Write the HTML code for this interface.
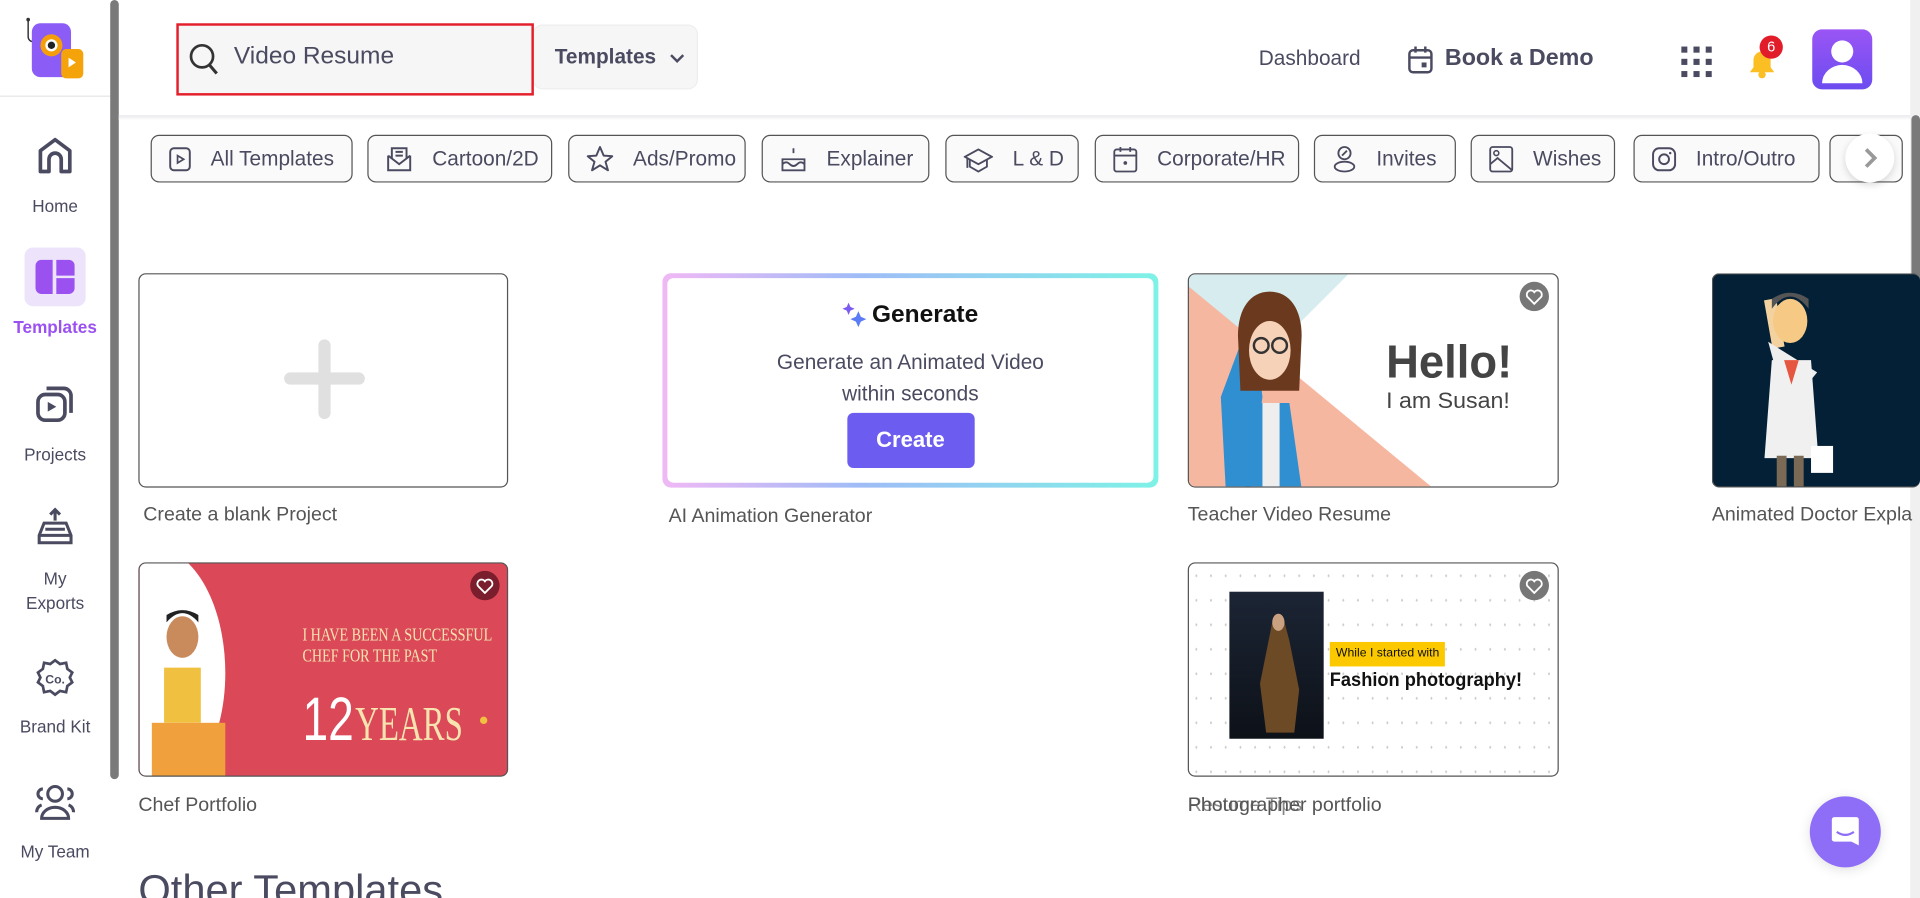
<!DOCTYPE html>
<html><head><meta charset="utf-8"><style>
*{box-sizing:border-box;margin:0;padding:0}
html,body{width:1920px;height:898px;overflow:hidden;background:#fff}
#w{position:absolute;left:0;top:0;width:1568px;height:733px;transform:scale(1.22449,1.2251);transform-origin:0 0;font-family:"Liberation Sans",sans-serif;color:#4a4a60;overflow:hidden}
.a{position:absolute}
.nav{position:absolute;left:0;width:90px;text-align:center;font-size:14px;color:#4a4a60;line-height:20px}
.nav svg{display:block;margin:0 auto 14px}
.chip{position:absolute;top:110px;height:39px;border:1px solid #555;border-radius:7px;background:#fafafa;font-size:17px;color:#4a4a60;display:flex;align-items:center;padding-left:14px}
.chip svg{margin-right:16px;flex:none}
.card{position:absolute;border:1px solid #555;border-radius:6px;overflow:hidden;background:#fff}
.lbl{position:absolute;font-size:16px;color:#555}
.heart{position:absolute;width:24px;height:24px;border-radius:50%;background:#777;display:flex;align-items:center;justify-content:center}
</style></head><body><div id="w">
<!-- sidebar -->
<svg class="a" style="left:18px;top:14px" width="54" height="52" viewBox="0 0 54 52"><path d="M5 2v14a4 4 0 0 0 4 4" stroke="#333" fill="none" stroke-width="1.2"/><circle cx="5" cy="2" r="1.5" fill="#333"/><rect x="8" y="5" width="32" height="44" rx="7" fill="#8b5cf6"/><circle cx="24" cy="23" r="9" fill="#f59e0b"/><circle cx="24" cy="23" r="5" fill="#fff"/><circle cx="24" cy="23" r="3" fill="#222"/><rect x="32" y="26" width="18" height="24" rx="4" fill="#f5a30b"/><path d="M38 33l6 4-6 4z" fill="#fff"/></svg>
<div class="a" style="left:0;top:78px;width:90px;height:1px;background:#e5e5e5"></div>
<div class="a" style="left:90px;top:0;width:7px;height:636px;background:#7a7a7a;border-radius:4px"></div>
<div class="nav" style="top:110px"><svg width="32" height="34" viewBox="0 0 32 34"><path d="M4 30V13L16 4l12 9v17h-7V20a5 5 0 0 0-10 0v10z" fill="none" stroke="#4a4a60" stroke-width="3" stroke-linejoin="round"/></svg>Home</div>
<div class="a" style="left:20px;top:202px;width:50px;height:48px;border-radius:7px;background:#ede4fc"></div>
<svg class="a" style="left:29px;top:212px" width="32" height="28" viewBox="0 0 32 28"><path d="M5 0h9v28H5a5 5 0 0 1-5-5V5a5 5 0 0 1 5-5z" fill="#9b51f0"/><path d="M17 0h10a5 5 0 0 1 5 5v8H17z" fill="#9b51f0"/><path d="M17 15h15v8a5 5 0 0 1-5 5H17z" fill="#9b51f0"/></svg>
<div class="nav" style="top:257px;color:#9b51f0;font-weight:bold">Templates</div>
<div class="nav" style="top:313px"><svg width="34" height="34" viewBox="0 0 34 34"><rect x="3" y="9" width="22" height="21" rx="6" fill="none" stroke="#4a4a60" stroke-width="3"/><path d="M10 4h14a6 6 0 0 1 6 6v14" fill="none" stroke="#4a4a60" stroke-width="3"/><path d="M11 15l7 4-7 4z" fill="#4a4a60"/></svg>Projects</div>
<div class="nav" style="top:414px"><svg width="30" height="34" viewBox="0 0 30 34"><path d="M15 2v9M11 6l4-4 4 4" stroke="#4a4a60" stroke-width="2.5" fill="none"/><path d="M6 13h18l4 10v6H2v-6z" fill="none" stroke="#4a4a60" stroke-width="2.5"/><path d="M7 18h16M3 23h24" stroke="#4a4a60" stroke-width="2.5"/></svg>My<br>Exports</div>
<div class="nav" style="top:537px"><svg width="34" height="32" viewBox="0 0 34 32"><path d="M17 2l4 3 5-1 1 5 4 3-2 4 2 4-4 3-1 5-5-1-4 3-4-3-5 1-1-5-4-3 2-4-2-4 4-3 1-5 5 1z" fill="none" stroke="#4a4a60" stroke-width="2.2"/><text x="17" y="21" font-size="10" text-anchor="middle" fill="#4a4a60" font-family="Liberation Sans" font-weight="bold">Co.</text></svg>Brand Kit</div>
<div class="nav" style="top:639px"><svg width="36" height="32" viewBox="0 0 36 32"><circle cx="18" cy="9" r="6" fill="none" stroke="#4a4a60" stroke-width="2.5"/><path d="M7 29a11 9 0 0 1 22 0z" fill="none" stroke="#4a4a60" stroke-width="2.5"/><path d="M8 5a4 4 0 0 0 0 8M28 5a4 4 0 0 1 0 8M3 24a6 6 0 0 1 4-6M33 24a6 6 0 0 0-4-6" fill="none" stroke="#4a4a60" stroke-width="2.5"/></svg>My Team</div>
<!-- header -->
<div class="a" style="left:97px;top:94px;width:1463px;height:4px;background:linear-gradient(#e8e8ee,#fff)"></div>
<div class="a" style="left:435px;top:20px;width:135px;height:53px;background:#f6f6f6;border:1px solid #eee;border-radius:8px;font-weight:bold;font-size:17px;color:#4a4a60;padding:16px 0 0 17px">Templates <svg width="12" height="8" viewBox="0 0 12 8" style="margin-left:6px"><path d="M1 1l5 5 5-5" stroke="#4a4a60" stroke-width="2" fill="none"/></svg></div>
<div class="a" style="left:144px;top:19px;width:292px;height:59px;background:#f6f6f6;border:2px solid #e41e2a"></div>
<svg class="a" style="left:154px;top:35px" width="26" height="28" viewBox="0 0 26 28"><circle cx="11" cy="11" r="9" fill="none" stroke="#333" stroke-width="2.2"/><path d="M17 18l6 7" stroke="#333" stroke-width="2.5"/></svg>
<div class="a" style="left:191px;top:35px;font-size:20px;color:#4a4a60">Video Resume</div>
<div class="a" style="left:1028px;top:38px;font-size:17px;color:#4a4a60">Dashboard</div>
<svg class="a" style="left:1149px;top:37px" width="22" height="24" viewBox="0 0 22 24"><rect x="2" y="4" width="18" height="18" rx="3" fill="none" stroke="#4a4a60" stroke-width="2"/><path d="M2 10h18M7 1v5M15 1v5" stroke="#4a4a60" stroke-width="2"/><rect x="12" y="14" width="4" height="4" fill="#4a4a60"/></svg>
<div class="a" style="left:1180px;top:37px;font-size:19px;font-weight:bold;color:#4a4a60">Book a Demo</div>
<svg class="a" style="left:1373px;top:38px" width="25" height="25" viewBox="0 0 25 25" fill="#4a4a60"><rect x="0" y="0" width="5" height="5"/><rect x="10" y="0" width="5" height="5"/><rect x="20" y="0" width="5" height="5"/><rect x="0" y="10" width="5" height="5"/><rect x="10" y="10" width="5" height="5"/><rect x="20" y="10" width="5" height="5"/><rect x="0" y="20" width="5" height="5"/><rect x="10" y="20" width="5" height="5"/><rect x="20" y="20" width="5" height="5"/></svg>
<svg class="a" style="left:1427px;top:38px" width="24" height="26" viewBox="0 0 24 26"><path d="M12 4a7 7 0 0 0-7 7v6l-3 4h20l-3-4v-6a7 7 0 0 0-7-7z" fill="#fbbf24"/><circle cx="12" cy="23" r="3" fill="#fbbf24"/></svg>
<div class="a" style="left:1437px;top:29px;width:19px;height:19px;border-radius:50%;background:#e11d2a;color:#fff;font-size:12px;text-align:center;line-height:19px">6</div>
<div class="a" style="left:1480px;top:24px;width:49px;height:49px;border-radius:8px;background:linear-gradient(#9a55f5,#6c4cf0);overflow:hidden"><svg width="49" height="49" viewBox="0 0 49 49"><circle cx="24.5" cy="18" r="9" fill="#fff"/><path d="M8 44a16.5 15 0 0 1 33 0z" fill="#fff"/></svg></div>
<!-- chips -->
<div class="chip" style="left:123px;width:165px"><svg width="18" height="20" viewBox="0 0 18 20"><rect x="1" y="1" width="16" height="18" rx="3" fill="none" stroke="#4a4a60" stroke-width="1.6"/><path d="M7 7l5 3-5 3z" fill="none" stroke="#4a4a60" stroke-width="1.4"/></svg>All Templates</div>
<div class="chip" style="left:300px;width:151px"><svg width="22" height="22" viewBox="0 0 22 22"><path d="M2 8v12h18V8" fill="none" stroke="#4a4a60" stroke-width="1.6"/><path d="M2 8l9 7 9-7M5 10V2h12v8M8 5h6M8 8h6" fill="none" stroke="#4a4a60" stroke-width="1.6"/></svg>Cartoon/2D</div>
<div class="chip" style="left:464px;width:145px"><svg width="22" height="22" viewBox="0 0 22 22"><path d="M11 1l3 7 7 .5-5.5 4.5 2 7-6.5-4-6.5 4 2-7L1 8.5 8 8z" fill="none" stroke="#4a4a60" stroke-width="1.6" stroke-linejoin="round"/></svg>Ads/Promo</div>
<div class="chip" style="left:622px;width:137px"><svg width="22" height="22" viewBox="0 0 22 22"><path d="M11 2v4M2 20V11h18v9zM2 20h18M2 15q3-3 6 0t6 0 6 0" fill="none" stroke="#4a4a60" stroke-width="1.5"/></svg>Explainer</div>
<div class="chip" style="left:772px;width:109px"><svg width="24" height="22" viewBox="0 0 24 22"><path d="M12 3L1 9l11 6 11-6zM5 11v6l7 4 7-4v-6M3 10v8" fill="none" stroke="#4a4a60" stroke-width="1.5"/></svg>L &amp; D</div>
<div class="chip" style="left:894px;width:167px"><svg width="20" height="22" viewBox="0 0 20 22"><rect x="1" y="3" width="18" height="18" rx="2" fill="none" stroke="#4a4a60" stroke-width="1.5"/><path d="M1 8h18M6 1v4M14 1v4" stroke="#4a4a60" stroke-width="1.5"/><circle cx="10" cy="14" r="1.5" fill="#4a4a60"/></svg>Corporate/HR</div>
<div class="chip" style="left:1073px;width:116px"><svg width="20" height="22" viewBox="0 0 20 22"><circle cx="10" cy="6" r="5" fill="none" stroke="#4a4a60" stroke-width="1.5"/><path d="M8 8l4-4" stroke="#4a4a60" stroke-width="1.5"/><ellipse cx="10" cy="17" rx="8" ry="4" fill="none" stroke="#4a4a60" stroke-width="1.5"/></svg>Invites</div>
<div class="chip" style="left:1201px;width:118px"><svg width="20" height="22" viewBox="0 0 20 22"><rect x="1" y="1" width="18" height="20" rx="2" fill="none" stroke="#4a4a60" stroke-width="1.5"/><circle cx="6" cy="6" r="2" fill="none" stroke="#4a4a60" stroke-width="1.3"/><path d="M1 15l6-5 12 10" fill="none" stroke="#4a4a60" stroke-width="1.5"/></svg>Wishes</div>
<div class="chip" style="left:1334px;width:152px"><svg width="20" height="22" viewBox="0 0 20 22"><rect x="1" y="2" width="18" height="18" rx="5" fill="none" stroke="#4a4a60" stroke-width="1.6"/><circle cx="10" cy="11" r="4" fill="none" stroke="#4a4a60" stroke-width="1.6"/><circle cx="15" cy="6" r="1" fill="#4a4a60"/></svg>Intro/Outro</div>
<div class="chip" style="left:1494px;width:60px"></div>
<div class="a" style="left:1507px;top:109px;width:40px;height:40px;border-radius:50%;background:#fff;box-shadow:0 2px 6px rgba(0,0,0,.15)"><svg width="40" height="40" viewBox="0 0 40 40"><path d="M17 13l7 7-7 7" stroke="#999" stroke-width="3" fill="none"/></svg></div>
<!-- right scrollbar -->
<div class="a" style="left:1560px;top:0;width:8px;height:733px;background:#f0f0f0"></div>
<div class="a" style="left:1561px;top:94px;width:7px;height:276px;background:#7a7a7a;border-radius:4px"></div>
<!-- row1 -->
<div class="card" style="left:113px;top:223px;width:302px;height:175px"><svg width="302" height="175"><path d="M151 58v55M123 85h56" stroke="#e0e0e0" stroke-width="10" stroke-linecap="round"/></svg></div>
<div class="lbl" style="left:117px;top:412px">Create a blank Project</div>
<div class="a" style="left:541px;top:223px;width:405px;height:175px;border-radius:7px;background:linear-gradient(90deg,#f0b8f5,#9fbcf7 40%,#7ef2e6);padding:4px"><div style="width:100%;height:100%;background:#fff;border-radius:5px;text-align:center">
<div style="padding-top:18px;font-size:20px;font-weight:bold;color:#111"><svg width="20" height="22" viewBox="0 0 20 22" style="vertical-align:-4px;margin-right:4px"><path d="M5 2l1.5 3.5L10 7 6.5 8.5 5 12 3.5 8.5 0 7l3.5-1.5z" fill="#7c5cf0"/><path d="M13 9l2 4.5 4.5 2-4.5 2-2 4.5-2-4.5-4.5-2 4.5-2z" fill="#5b7cf5"/></svg>Generate</div>
<div style="margin-top:14px;font-size:17px;line-height:26px;color:#4a4a60">Generate an Animated Video<br>within seconds</div>
<div style="margin:2px auto 0;width:104px;height:45px;background:#6c5cf0;border-radius:5px;color:#fff;font-weight:bold;font-size:18px;line-height:45px">Create</div></div></div>
<div class="lbl" style="left:546px;top:413px">AI Animation Generator</div>
<div class="card" style="left:970px;top:223px;width:303px;height:175px"><svg width="303" height="175"><path d="M0 0h130L0 130z" fill="#d6ecee"/><path d="M0 10L200 175H0z" fill="#f6b7a1"/><path d="M52 30l8 70-10 75h-20l-4-75z" fill="#2f8fd1"/><path d="M40 50c0-22 10-36 26-36s26 14 26 36l-2 45H42z" fill="#6b3a1e"/><ellipse cx="66" cy="62" rx="17" ry="24" fill="#f6d2b8"/><circle cx="59" cy="58" r="6" fill="none" stroke="#333" stroke-width="2"/><circle cx="74" cy="58" r="6" fill="none" stroke="#333" stroke-width="2"/><path d="M52 105h30l10 70H46z" fill="#2f8fd1"/><path d="M60 105h14v70H60z" fill="#eee"/><text x="161" y="84" font-size="38" font-weight="bold" fill="#444" font-family="Liberation Sans" textLength="103" lengthAdjust="spacingAndGlyphs">Hello!</text><text x="161" y="109" font-size="18" fill="#444" font-family="Liberation Sans" textLength="101" lengthAdjust="spacingAndGlyphs">I am Susan!</text></svg><div class="heart" style="right:7px;top:6px"><svg width="14" height="13" viewBox="0 0 14 13"><path d="M7 12L1.5 6.5a3 3 0 0 1 5.5-4 3 3 0 0 1 5.5 4z" fill="none" stroke="#fff" stroke-width="1.5"/></svg></div></div>
<div class="lbl" style="left:970px;top:412px">Teacher Video Resume</div>
<div class="card" style="left:1398px;top:223px;width:170px;height:175px;background:#042036;border-right:none"><svg width="170" height="175"><rect x="45" y="20" width="10" height="40" fill="#f3d2a0" transform="rotate(-10 50 40)"/><path d="M45 55l15 55 25-30z" fill="#eee"/><ellipse cx="63" cy="38" rx="14" ry="18" fill="#f6c985"/><path d="M48 28q15-20 30 0v-8q-15-10-30 0z" fill="#555"/><path d="M48 70h32l6 80H42z" fill="#f0f0f0"/><path d="M58 70l6 20 6-20z" fill="#e5553f"/><rect x="52" y="148" width="8" height="27" fill="#7a6a55"/><rect x="66" y="148" width="8" height="27" fill="#7a6a55"/><rect x="80" y="140" width="18" height="22" fill="#fff"/></svg></div>
<div class="lbl" style="left:1398px;top:412px;white-space:nowrap">Animated Doctor Expla</div>
<!-- row2 -->
<div class="card" style="left:113px;top:459px;width:302px;height:175px;background:#db4857"><svg width="302" height="175"><path d="M0 0h40c40 40 40 140 0 175H0z" fill="#fff"/><rect x="10" y="130" width="60" height="45" fill="#f0a03c"/><path d="M20 85h30v45H20z" fill="#f0c040"/><ellipse cx="35" cy="60" rx="13" ry="17" fill="#c98a5c"/><path d="M22 48q13-15 26 0v-6q-13-8-26 0z" fill="#222"/><text x="133" y="63" font-size="15" fill="#f6e3b0" font-family="Liberation Serif" textLength="155" lengthAdjust="spacingAndGlyphs">I HAVE BEEN A SUCCESSFUL</text><text x="133" y="80" font-size="15" fill="#f6e3b0" font-family="Liberation Serif" textLength="110" lengthAdjust="spacingAndGlyphs">CHEF FOR THE PAST</text><text x="133" y="144" font-size="50" fill="#fff" font-family="Liberation Sans" textLength="42" lengthAdjust="spacingAndGlyphs">12</text><text x="176" y="144" font-size="40" fill="#f6e3b0" font-family="Liberation Serif" textLength="88" lengthAdjust="spacingAndGlyphs">YEARS</text><circle cx="281" cy="128" r="3" fill="#f0c040"/></svg><div class="heart" style="right:6px;top:6px;background:#7a1d2c"><svg width="14" height="13" viewBox="0 0 14 13"><path d="M7 12L1.5 6.5a3 3 0 0 1 5.5-4 3 3 0 0 1 5.5 4z" fill="none" stroke="#fff" stroke-width="1.5"/></svg></div></div>
<div class="lbl" style="left:113px;top:649px">Chef Portfolio</div>
<div class="card" style="left:970px;top:459px;width:303px;height:175px;background-image:radial-gradient(#ccc 0.6px,transparent 0.8px);background-size:12px 20px"><div class="a" style="left:33px;top:23px;width:77px;height:120px;background:linear-gradient(#1c2535,#0d1118)"><svg width="77" height="120"><path d="M35 25q5-10 10 0l4 15 8 40-4 35H30l-5-40z" fill="#6b4a25"/><ellipse cx="40" cy="25" rx="5" ry="7" fill="#c9a080"/></svg></div><div class="a" style="left:115px;top:64px;width:94px;height:20px;background:#fcc900;font-size:10px;color:#111;padding:4px 0 0 5px">While I started with</div><div class="a" style="left:115px;top:87px;font-size:16px;font-weight:bold;color:#111;transform:scaleX(.93);transform-origin:0 0">Fashion photography!</div><div class="heart" style="right:7px;top:6px"><svg width="14" height="13" viewBox="0 0 14 13"><path d="M7 12L1.5 6.5a3 3 0 0 1 5.5-4 3 3 0 0 1 5.5 4z" fill="none" stroke="#fff" stroke-width="1.5"/></svg></div></div>
<div class="lbl" style="left:970px;top:649px">Photographer portfolio</div>
<div class="lbl" style="left:970px;top:649px;opacity:.7">Resume Tips</div>
<div class="a" style="left:113px;top:708px;font-size:34px;color:#4a4a60">Other Templates</div>
<!-- chat -->
<div class="a" style="left:1478px;top:650px;width:58px;height:58px;border-radius:50%;background:#8f6ef7;box-shadow:0 2px 10px rgba(0,0,0,.12)"><svg width="58" height="58" viewBox="0 0 58 58"><path d="M20 17h18a2 2 0 0 1 2 2v21l-6-3H20a2 2 0 0 1-2-2V19a2 2 0 0 1 2-2z" fill="#fff"/><path d="M22 29q7 5 14 0" stroke="#8f6ef7" stroke-width="1.8" fill="none"/></svg></div>
</div></body></html>
